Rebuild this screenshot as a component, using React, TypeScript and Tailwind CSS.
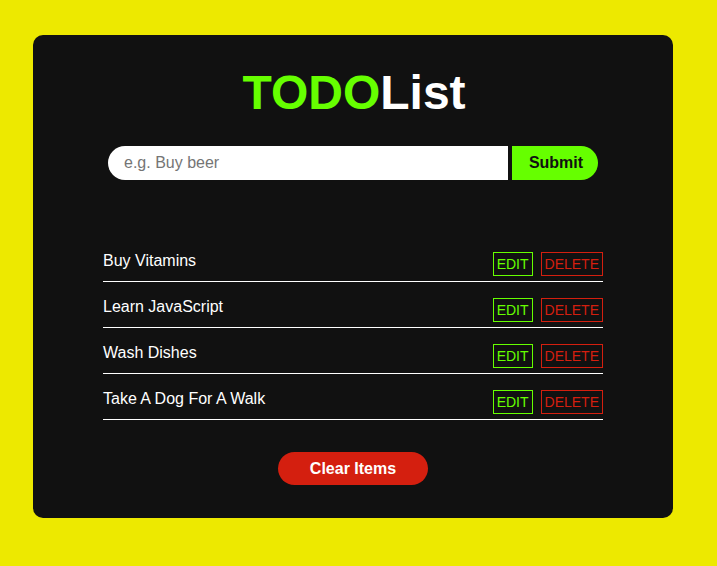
const items = ['Buy Vitamins', 'Learn JavaScript', 'Wash Dishes', 'Take A Dog For A Walk'];

export default function App() {
  return (
    <div className="min-h-screen w-full bg-[#ede900] pt-[35px] pl-[33px] font-['Liberation_Sans',Arial,sans-serif]">
      <div className="flex w-[640px] flex-col items-center rounded-[10px] bg-[#111111] pb-[33px] pt-[34px]">
        {/* Title */}
        <h1 className="pl-[2px] text-[48px] font-bold leading-[48px]">
          <span className="text-[#66ff00]">TODO</span>
          <span className="text-white">List</span>
        </h1>

        {/* Form */}
        <form className="mt-[29px] flex gap-[4px]" onSubmit={(e) => e.preventDefault()}>
          <input
            type="text"
            placeholder="e.g. Buy beer"
            className="h-[34px] w-[400px] rounded-l-[17px] bg-white pl-4 text-[16px] text-black outline-none placeholder:text-[#757575]"
          />
          <button
            type="submit"
            className="h-[34px] w-[86px] rounded-r-[17px] bg-[#66ff00] pl-[2px] text-[16px] font-bold text-[#111111]"
          >
            Submit
          </button>
        </form>

        {/* List */}
        <ul className="mt-[56px] w-[500px]">
          {items.map((item) => (
            <li key={item} className="flex h-[46px] justify-between border-b border-white">
              <span className="mt-[13px] text-[16px] leading-6 text-white">{item}</span>
              <div className="mt-[16px] flex gap-[8px]">
                <button className="flex h-6 items-center border border-[#66ff00] px-[3px] text-[14px] text-[#66ff00]">
                  EDIT
                </button>
                <button className="flex h-6 items-center border border-[#d41f0f] px-[3px] text-[14px] text-[#d41f0f]">
                  DELETE
                </button>
              </div>
            </li>
          ))}
        </ul>

        <button className="mt-[32px] h-[33px] w-[150px] rounded-full bg-[#d41f0f] text-[16px] font-bold text-white">
          Clear Items
        </button>
      </div>
    </div>
  );
}
